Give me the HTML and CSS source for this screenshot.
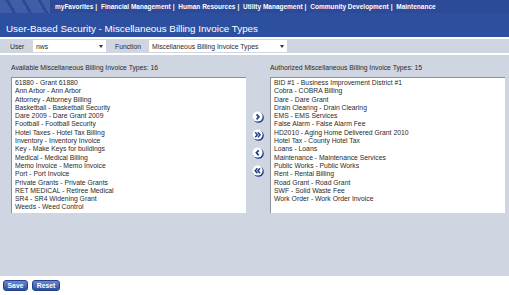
FILE: index.html
```html
<!DOCTYPE html>
<html lang="en">
<head>
    <meta charset="UTF-8">
    <title>User-Based Security - Miscellaneous Billing Invoice Types</title>
    <link rel="stylesheet" href="styles.css">
</head>
<body>
    <div class="topnav">
        <div class="stripes"></div>
        <nav class="menu">
            <a href="#">myFavorites</a><span class="sep">|</span>
            <a href="#">Financial Management</a><span class="sep">|</span>
            <a href="#">Human Resources</a><span class="sep">|</span>
            <a href="#">Utility Management</a><span class="sep">|</span>
            <a href="#">Community Development</a><span class="sep">|</span>
            <a href="#">Maintenance</a>
        </nav>
    </div>

    <div class="titlebar">
        <h1>User-Based Security - Miscellaneous Billing Invoice Types</h1>
    </div>

    <div class="filters">
        <label class="filter-label">User</label>
        <div class="dropdown dropdown-user"><span>nws</span><span class="caret"></span></div>
        <label class="filter-label">Function</label>
        <div class="dropdown dropdown-function"><span>Miscellaneous Billing Invoice Types</span><span class="caret"></span></div>
    </div>

    <div class="main">
        <div class="pane">
            <div class="pane-title">Available Miscellaneous Billing Invoice Types: 16</div>
            <ul class="listbox">
                <li>61880 - Grant 61880</li>
                <li>Ann Arbor - Ann Arbor</li>
                <li>Attorney - Attorney Billing</li>
                <li>Basketball - Basketball Security</li>
                <li>Dare 2009 - Dare Grant 2009</li>
                <li>Football - Football Security</li>
                <li>Hotel Taxes - Hotel Tax Billing</li>
                <li>Inventory - Inventory Invoice</li>
                <li>Key - Make Keys for buildings</li>
                <li>Medical - Medical Billing</li>
                <li>Memo Invoice - Memo Invoice</li>
                <li>Port - Port Invoice</li>
                <li>Private Grants - Private Grants</li>
                <li>RET MEDICAL - Retiree Medical</li>
                <li>SR4 - SR4 Widening Grant</li>
                <li>Weeds - Weed Control</li>
            </ul>
        </div>

        <div class="movers">
            <button class="mover" title="Add">
                <svg width="12" height="12" viewBox="0 0 12 12"><circle cx="6.5" cy="6.5" r="5.3" fill="#1d3a86"/><circle cx="5.6" cy="5.6" r="5" fill="#fff"/><path d="M4.6 3.3 L6.9 5.8 L4.6 8.3" fill="none" stroke="#233f8c" stroke-width="1.7"/></svg>
            </button>
            <button class="mover" title="Add all">
                <svg width="12" height="12" viewBox="0 0 12 12"><circle cx="6.5" cy="6.5" r="5.3" fill="#1d3a86"/><circle cx="5.6" cy="5.6" r="5" fill="#fff"/><path d="M3.2 3.3 L5.4 5.8 L3.2 8.3 M5.9 3.3 L8.1 5.8 L5.9 8.3" fill="none" stroke="#233f8c" stroke-width="1.5"/></svg>
            </button>
            <button class="mover" title="Remove">
                <svg width="12" height="12" viewBox="0 0 12 12"><circle cx="6.5" cy="6.5" r="5.3" fill="#1d3a86"/><circle cx="5.6" cy="5.6" r="5" fill="#fff"/><path d="M6.7 3.3 L4.4 5.8 L6.7 8.3" fill="none" stroke="#233f8c" stroke-width="1.7"/></svg>
            </button>
            <button class="mover" title="Remove all">
                <svg width="12" height="12" viewBox="0 0 12 12"><circle cx="6.5" cy="6.5" r="5.3" fill="#1d3a86"/><circle cx="5.6" cy="5.6" r="5" fill="#fff"/><path d="M5.4 3.3 L3.2 5.8 L5.4 8.3 M8.1 3.3 L5.9 5.8 L8.1 8.3" fill="none" stroke="#233f8c" stroke-width="1.5"/></svg>
            </button>
        </div>

        <div class="pane">
            <div class="pane-title">Authorized Miscellaneous Billing Invoice Types: 15</div>
            <ul class="listbox">
                <li>BID #1 - Business Improvement District #1</li>
                <li>Cobra - COBRA Billing</li>
                <li>Dare - Dare Grant</li>
                <li>Drain Clearing - Drain Clearing</li>
                <li>EMS - EMS Services</li>
                <li>False Alarm - False Alarm Fee</li>
                <li>HD2010 - Aging Home Delivered Grant 2010</li>
                <li>Hotel Tax - County Hotel Tax</li>
                <li>Loans - Loans</li>
                <li>Maintenance - Maintenance Services</li>
                <li>Public Works - Public Works</li>
                <li>Rent - Rental Billing</li>
                <li>Road Grant - Road Grant</li>
                <li>SWF - Solid Waste Fee</li>
                <li>Work Order - Work Order Invoice</li>
            </ul>
        </div>
    </div>

    <div class="actions">
        <button class="btn btn-save">Save</button>
        <button class="btn btn-reset">Reset</button>
    </div>
</body>
</html>
```

FILE: styles.css
```css
body {
    margin: 0;
    font-family: "Liberation Sans", Arial, sans-serif;
    font-size: 6.8px;
    color: #2a2a2a;
    background-color: #fff;
}

.topnav {
    display: flex;
    align-items: center;
    height: 13px;
    background-color: #2c4a97;
}

.stripes {
    width: 50px;
    height: 13px;
    margin-right: 5px;
    background: repeating-linear-gradient(60deg, #4562a9 0 11px, #2c4a97 11px 14px);
    opacity: 0.8;
}

.menu {
    color: #fff;
    font-weight: bold;
    font-size: 6.5px;
    white-space: nowrap;
}

.menu a {
    color: #fff;
    text-decoration: none;
}

.menu .sep {
    margin: 0 2px;
}

.titlebar {
    height: 24px;
    background-color: #2d4f9f;
    border-bottom: 2px solid #fff;
}

.titlebar h1 {
    margin: 0;
    padding: 10px 0 0 6px;
    font-size: 9.8px;
    font-weight: normal;
    line-height: 12px;
    color: #fff;
}

.filters {
    display: flex;
    align-items: center;
    height: 14px;
    background-color: #cfd5e1;
    border-bottom: 2px solid #fff;
}

.filter-label {
    margin-left: 10px;
    width: 23px;
}

.dropdown {
    display: flex;
    justify-content: space-between;
    align-items: center;
    height: 12px;
    padding: 0 3px;
    background-color: #fff;
    box-sizing: border-box;
}

.dropdown-user {
    width: 73px;
}

.dropdown-function {
    width: 138px;
}

.filters .filter-label:nth-of-type(2) {
    margin-left: 9px;
    width: 34px;
}

.caret {
    width: 0;
    height: 0;
    border-left: 2px solid transparent;
    border-right: 2px solid transparent;
    border-top: 3px solid #333;
}

.main {
    display: flex;
    align-items: flex-start;
    height: 221px;
    padding-left: 11px;
    background-color: #cfd5e1;
}

.pane {
    width: 235px;
}

.pane-title {
    padding-top: 8px;
    line-height: 10px;
    margin-bottom: 4px;
}

.listbox {
    height: 136px;
    margin: 0;
    padding: 1px 0 0 3px;
    list-style: none;
    box-sizing: border-box;
    background-color: #fff;
    border-top: 1px solid #8d9199;
    border-left: 1px solid #8d9199;
}

.listbox li {
    line-height: 8.3px;
    white-space: nowrap;
}

.movers {
    display: flex;
    flex-direction: column;
    align-items: center;
    justify-content: center;
    gap: 6px;
    width: 24px;
    height: 136px;
    margin-top: 21px;
}

.mover {
    width: 12px;
    height: 12px;
    padding: 0;
    border: none;
    background: none;
    cursor: pointer;
}

.mover svg {
    display: block;
}

.actions {
    display: flex;
    gap: 4px;
    padding: 4px 0 0 3px;
}

.btn {
    height: 11px;
    padding: 0;
    font-family: "Liberation Sans", Arial, sans-serif;
    font-size: 6.8px;
    font-weight: bold;
    color: #fff;
    background: linear-gradient(#6a88cc, #2d4e9f);
    border: 1px solid #24418b;
    border-radius: 3px;
    cursor: pointer;
}

.btn-save {
    width: 25px;
}

.btn-reset {
    width: 28px;
}
```
